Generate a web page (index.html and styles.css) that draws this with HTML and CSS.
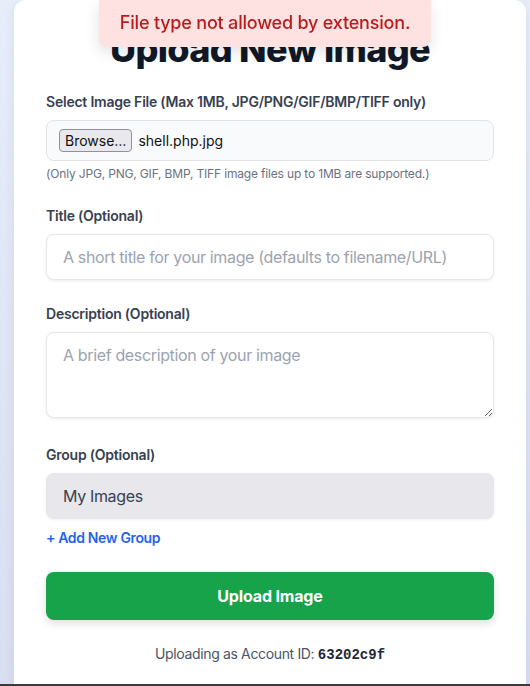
FILE: index.html
```html
<!DOCTYPE html>
<html lang="en">
<head>
<meta charset="utf-8">
<title>Upload New Image</title>
<link rel="stylesheet" href="styles.css">
</head>
<body>
<div class="page">
  <main class="card">
    <h1 class="title">Upload New Image</h1>
    <form class="form">
      <div class="field">
        <label class="label">Select Image File (Max 1MB, JPG/PNG/GIF/BMP/TIFF only)</label>
        <div class="file-box">
          <span class="browse">Browse…</span>
          <span class="file-name">shell.php.jpg</span>
        </div>
        <p class="help">(Only JPG, PNG, GIF, BMP, TIFF image files up to 1MB are supported.)</p>
      </div>
      <div class="field">
        <label class="label" for="title">Title (Optional)</label>
        <input class="input" id="title" type="text" placeholder="A short title for your image (defaults to filename/URL)">
      </div>
      <div class="field">
        <label class="label" for="desc">Description (Optional)</label>
        <textarea class="input textarea" id="desc" placeholder="A brief description of your image"></textarea>
      </div>
      <div class="field">
        <label class="label" for="group">Group (Optional)</label>
        <select class="select" id="group"><option>My Images</option></select>
        <a class="add-group" href="#">+ Add New Group</a>
      </div>
      <button class="submit" type="button">Upload Image</button>
    </form>
    <p class="account">Uploading as Account ID: <code class="acc-id">63202c9f</code></p>
  </main>
</div>
<div class="bottom-bar"></div>
<div class="toast">File type not allowed by extension.</div>
</body>
</html>
```

FILE: styles.css
```css
* { box-sizing: border-box; }
html, body { margin: 0; padding: 0; }
body {
  height: 686px;
  overflow: hidden;
  display: flex;
  flex-direction: column;
  font-family: Inter, "Noto Sans", sans-serif;
  letter-spacing: -0.022em;
  background: linear-gradient(to bottom, #e7edf9, #d9def1);
}
.page {
  flex: 1;
  overflow: hidden;
  padding-left: 14px;
}
.card {
  width: 512px;
  min-height: 100%;
  background: #ffffff;
  border-radius: 12px 12px 0 0;
  box-shadow: 0 4px 12px rgba(30, 41, 80, 0.08);
  padding: 29px 32px 20px;
}
.title {
  margin: 0 0 23px;
  font-size: 36px;
  line-height: 40px;
  font-weight: 800;
  color: #111827;
  text-align: center;
  letter-spacing: -0.7px;
}
.form { display: flex; flex-direction: column; }
.field { margin-bottom: 24px; display: flex; flex-direction: column; }
.label {
  display: block;
  font-size: 14px;
  line-height: 20px;
  font-weight: 600;
  color: #374151;
  margin-bottom: 8px;
  letter-spacing: -0.016em;
}
.file-box {
  display: flex;
  align-items: center;
  gap: 6px;
  height: 41px;
  padding: 0 12px;
  border: 1px solid #dfe2e7;
  border-radius: 8px;
  background: #f9fafb;
}
.browse {
  display: inline-block;
  height: 23px;
  line-height: 21px;
  padding: 0 5px;
  font-size: 14px;
  letter-spacing: 0;
  color: #111;
  background: #e9e9ed;
  border: 1px solid #8f8f9d;
  border-radius: 4px;
}
.file-name { font-size: 14px; color: #111; letter-spacing: 0; }
.help {
  margin: 5px 0 0;
  font-size: 12px;
  line-height: 16px;
  color: #6b7280;
  letter-spacing: -0.014em;
}
.input {
  width: 100%;
  height: 46px;
  padding: 10px 16px;
  font-family: inherit;
  letter-spacing: inherit;
  font-size: 16px;
  line-height: 24px;
  color: #111827;
  background: #fff;
  border: 1px solid #e5e7eb;
  border-radius: 8px;
  box-shadow: 0 1px 3px rgba(0, 0, 0, 0.08);
  outline: none;
}
.input::placeholder { color: #9ca3af; }
.textarea { height: 86px; resize: vertical; display: block; margin-bottom: 3px; }
.select {
  width: 100%;
  height: 46px;
  padding: 0 17px;
  font-family: inherit;
  letter-spacing: inherit;
  font-size: 16px;
  color: #374151;
  background: #e7e7ec;
  border: none;
  border-radius: 8px;
  box-shadow: 0 1px 3px rgba(0, 0, 0, 0.06);
  appearance: none;
  -webkit-appearance: none;
}
.add-group {
  margin-top: 9px;
  font-size: 14px;
  line-height: 20px;
  font-weight: 600;
  color: #2563eb;
  text-decoration: none;
}
.submit {
  height: 48px;
  width: 100%;
  border: none;
  border-radius: 8px;
  background: #16a34a;
  color: #fff;
  font-family: inherit;
  letter-spacing: -0.01em;
  font-size: 16px;
  font-weight: 700;
  box-shadow: 0 4px 8px rgba(0, 0, 0, 0.12);
}
.account {
  margin: 24px 0 0;
  text-align: center;
  font-size: 14px;
  line-height: 20px;
  color: #4b5563;
}
.acc-id {
  font-family: "Liberation Mono", monospace;
  font-weight: 700;
  color: #1f2937;
  font-size: 14px;
  letter-spacing: 0;
}
.bottom-bar { height: 2px; background: #3a3a3a; flex: none; }
.toast {
  position: fixed;
  top: 0;
  left: 50%;
  transform: translateX(-50%);
  padding: 9px 21px 10px;
  background: #fee2e2;
  color: #b91c1c;
  font-size: 18px;
  line-height: 28px;
  font-weight: 500;
  letter-spacing: -0.011em;
  white-space: nowrap;
  border-radius: 0 0 8px 8px;
  box-shadow: 0 6px 14px rgba(0, 0, 0, 0.1);
}
```
